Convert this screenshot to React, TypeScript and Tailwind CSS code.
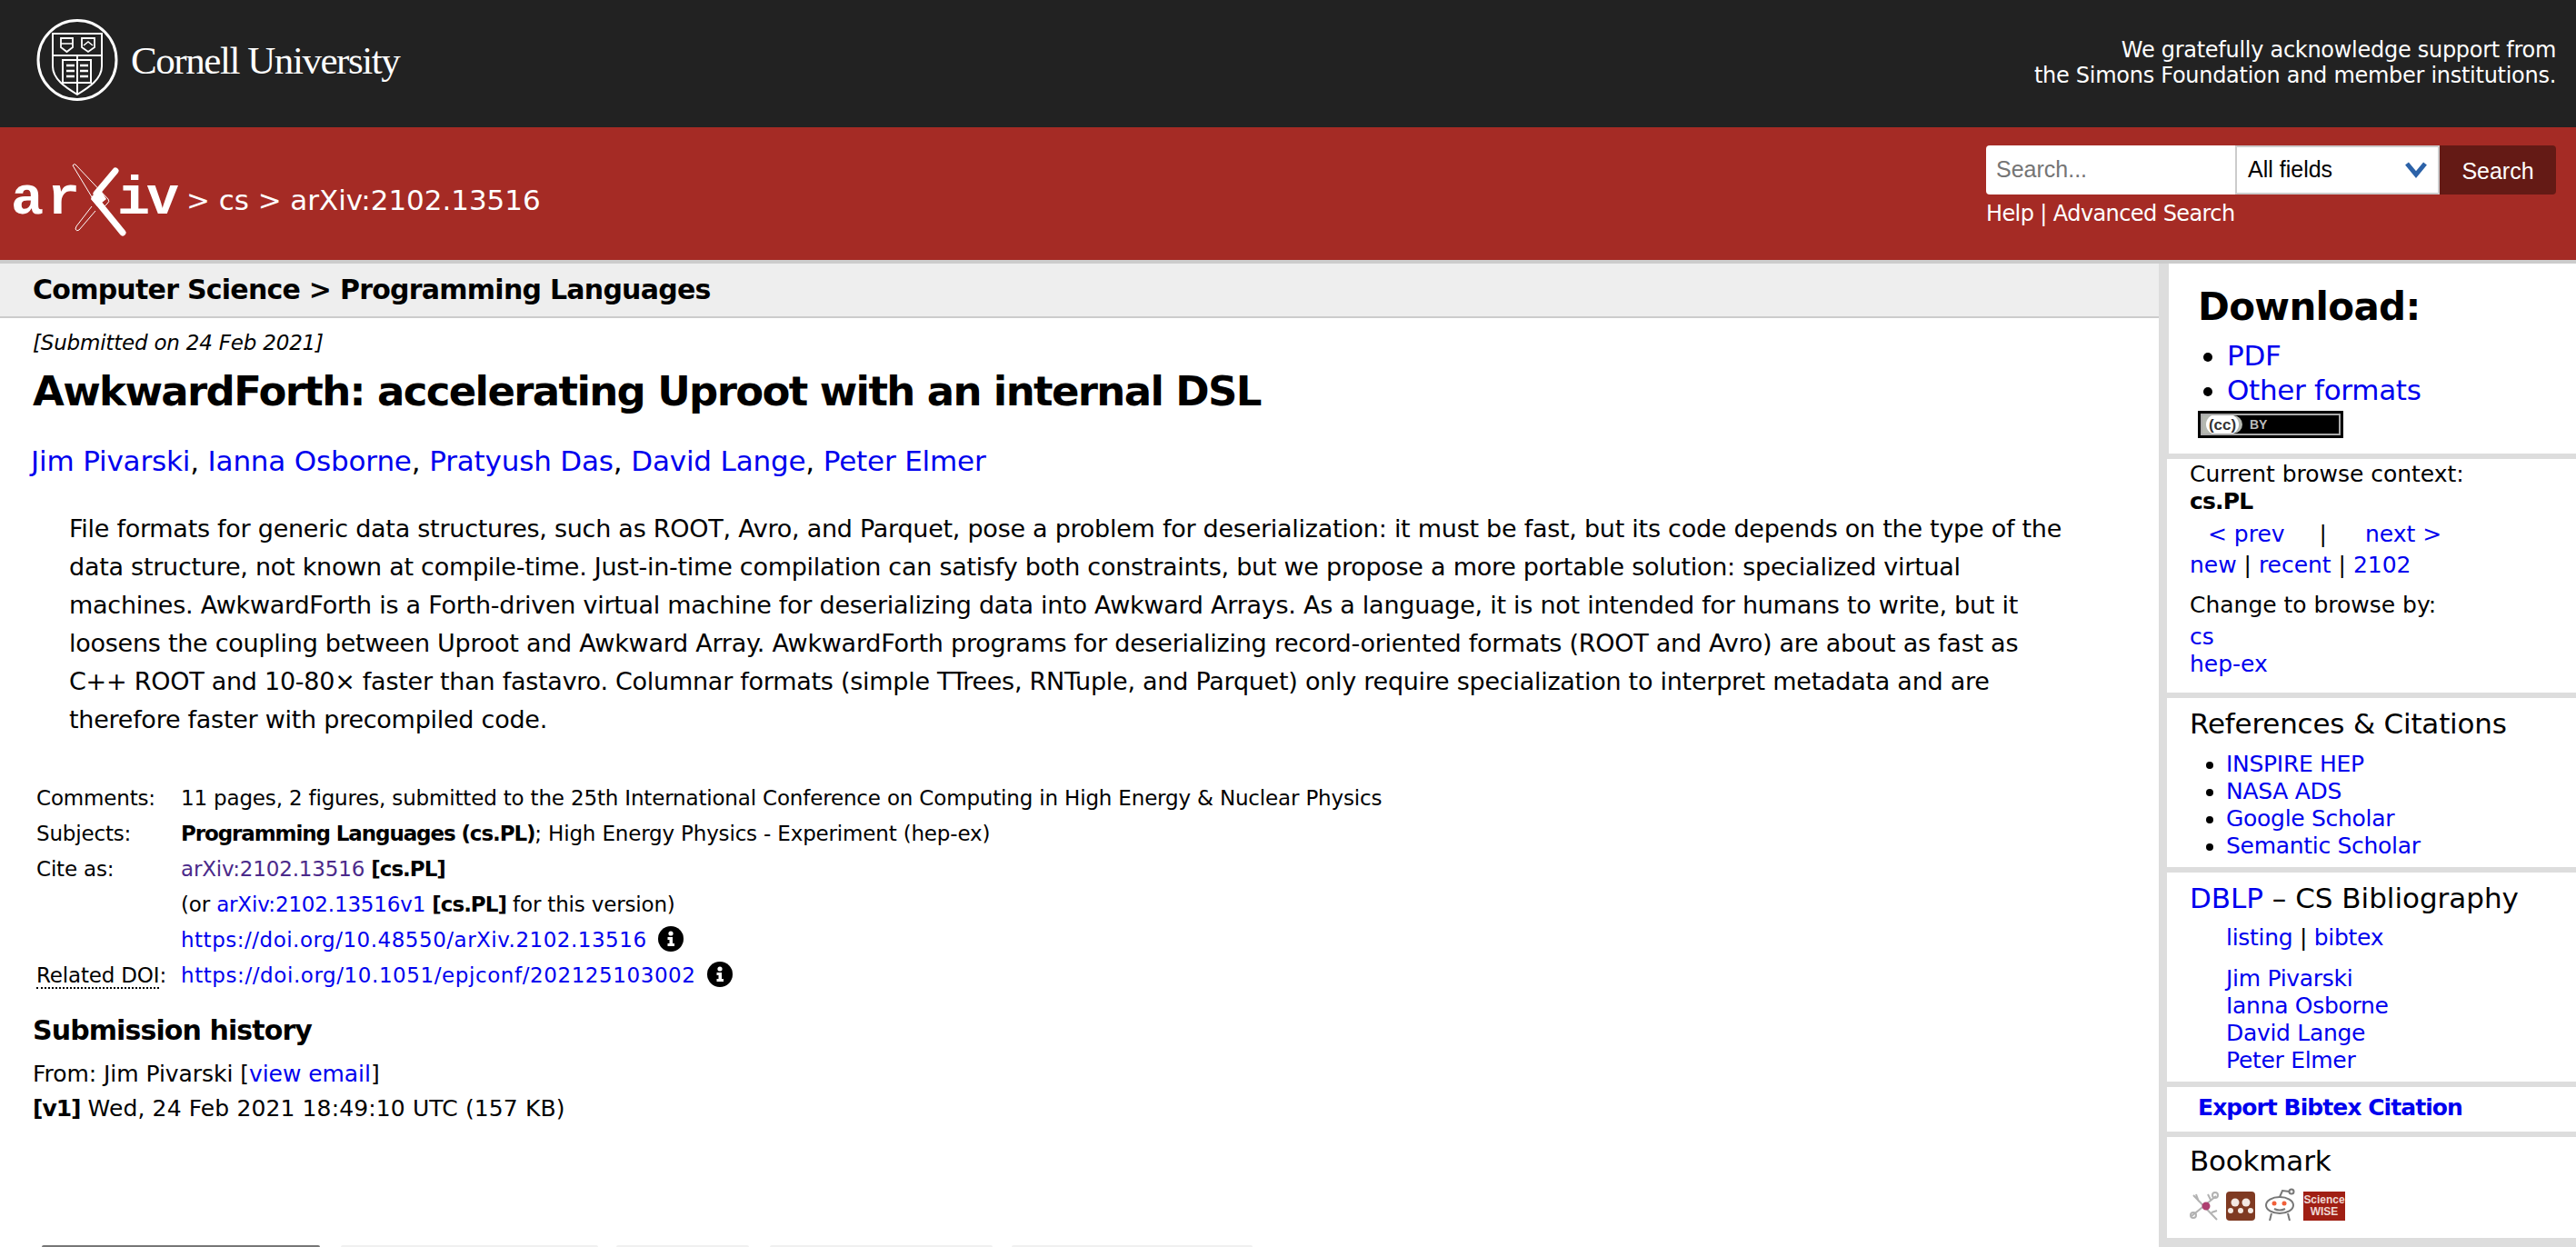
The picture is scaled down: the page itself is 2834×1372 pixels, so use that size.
const sans = "font-['DejaVu_Sans',sans-serif]";

const abstractLines = [
  "File formats for generic data structures, such as ROOT, Avro, and Parquet, pose a problem for deserialization: it must be fast, but its code depends on the type of the",
  "data structure, not known at compile-time. Just-in-time compilation can satisfy both constraints, but we propose a more portable solution: specialized virtual",
  "machines. AwkwardForth is a Forth-driven virtual machine for deserializing data into Awkward Arrays. As a language, it is not intended for humans to write, but it",
  "loosens the coupling between Uproot and Awkward Array. AwkwardForth programs for deserializing record-oriented formats (ROOT and Avro) are about as fast as",
  "C++ ROOT and 10-80× faster than fastavro. Columnar formats (simple TTrees, RNTuple, and Parquet) only require specialization to interpret metadata and are",
  "therefore faster with precompiled code.",
];

function CornellSeal() {
  return (
    <svg width="90" height="90" viewBox="0 0 90 90" fill="none" stroke="white">
      <ellipse cx="45" cy="45" rx="43" ry="43.5" strokeWidth="3" />
      <path d="M18 16H72V52C72 66 58 75 45 83C32 75 18 66 18 52Z" strokeWidth="2" />
      <path d="M18 40H72M45 40V83" strokeWidth="2" />
      <path d="M27 21H40V31L33.5 36L27 31Z M50 21H64V31L57 36L50 31Z" strokeWidth="1.8" />
      <path d="M27 27H40M52 29L57 25L62 29" strokeWidth="1.5" />
      <path d="M29 45H60V70H29Z" strokeWidth="2" />
      <path d="M33 51H42M33 57H42M33 63H42M48 51H57M48 57H57M48 63H57" strokeWidth="2.6" />
    </svg>
  );
}

function ArxivLogo() {
  const letters = "absolute top-[14px] text-[60px] leading-[60px] font-bold text-white font-['Liberation_Mono',monospace]";
  return (
    <div className="relative w-[188px] h-[90px] shrink-0">
      <span className={letters + " left-[2px] tracking-[4px]"}>ar</span>
      <span className={letters + " left-[119px] -tracking-[4px]"}>iv</span>
      <svg className="absolute left-0 top-0" width="200" height="90" viewBox="0 0 200 90" fill="none">
        <path d="M70 7Q71 5 73 6L109 44Q111 47 108 49L103 54M70 7L96 50" stroke="white" strokeWidth="1" />
        <path d="M95 57L77 78Q74 80 73 77L74 74L91 52" stroke="white" strokeWidth="1" />
        <path d="M117 13L96 38" stroke="white" strokeWidth="7" strokeLinecap="round" />
        <path d="M94 43L125 81" stroke="white" strokeWidth="7" strokeLinecap="round" />
        <path d="M100 33L90 44L97 52L107 44Z" fill="white" />
      </svg>
    </div>
  );
}

function InfoIcon() {
  return (
    <svg className="inline-block ml-[12px] align-[-5px]" width="28" height="28" viewBox="0 0 28 28">
      <circle cx="14" cy="14" r="14" fill="black" />
      <circle cx="14" cy="8" r="2.6" fill="white" />
      <path d="M10.5 12H16V19H18V22H10.5V19H12.5V15H10.5Z" fill="white" />
    </svg>
  );
}

function CcBadge() {
  return (
    <div className="mt-[4px] w-[160px] h-[30px] bg-[#aaaaaa] border-[3px] border-black p-[2px] font-['Liberation_Sans',sans-serif]">
      <div className="h-full bg-black flex items-center overflow-hidden">
        <div className="w-[44px] h-full bg-[#b5b8b1] rounded-r-[10px] flex items-center justify-center">
          <div className="w-[36px] h-[22px] rounded-full bg-white flex items-center justify-center text-[17px] leading-none font-bold text-[#333333]">(cc)</div>
        </div>
        <span className="ml-[8px] text-[14px] leading-none font-bold text-[#bbbbbb]">BY</span>
      </div>
    </div>
  );
}

function BookmarkIcons() {
  return (
    <div className="flex items-end mt-[10px]">
      <svg width="32" height="32" viewBox="0 0 32 32" stroke="#b2b2b2" fill="none" strokeWidth="2">
        <path d="M4 4L30 31M2 27L29 5M10 11L7 3M23 9L20 3M24 23L30 21" />
        <circle cx="28" cy="4" r="3" />
        <circle cx="4" cy="26" r="3" />
        <circle cx="18" cy="16" r="3.5" fill="#ad3f70" stroke="#ad3f70" />
      </svg>
      <svg className="ml-[8px]" width="32" height="32" viewBox="0 0 32 32">
        <rect width="32" height="32" rx="4" fill="#7f3a22" />
        <circle cx="10" cy="12" r="4.5" fill="#f3e8e2" />
        <circle cx="22" cy="12" r="4.5" fill="#f3e8e2" />
        <circle cx="16" cy="21" r="3" fill="#f3e8e2" />
        <circle cx="5" cy="21" r="3" fill="#f3e8e2" />
        <circle cx="27" cy="21" r="3" fill="#f3e8e2" />
      </svg>
      <svg className="ml-[9px]" width="36" height="36" viewBox="0 0 36 36" fill="none" stroke="#777777" strokeWidth="2">
        <ellipse cx="18" cy="19" rx="15" ry="9" fill="white" />
        <circle cx="12" cy="17" r="2.5" fill="#f0603a" stroke="none" />
        <circle cx="23" cy="17" r="2.5" fill="#f0603a" stroke="none" />
        <path d="M18 10L21 3L29 4M12 23Q18 26 24 23M9 28L7 36M27 28L29 36" />
        <circle cx="31" cy="4" r="2.5" />
      </svg>
      <div className="ml-[8px] w-[46px] h-[32px] bg-[#a01f14] text-[#efd9d5] flex flex-col items-center justify-center text-[12px] leading-[13px] font-['Liberation_Sans',sans-serif] font-bold">
        <span>Science</span>
        <span>WISE</span>
      </div>
    </div>
  );
}

function A({ children, className = "" }: { children: React.ReactNode; className?: string }) {
  return <a className={"text-[#0000ee] " + className}>{children}</a>;
}

function MetaRow({ label, children }: { label: React.ReactNode; children: React.ReactNode }) {
  return (
    <div className="flex h-[39px] items-center">
      <div className="w-[159px] shrink-0">{label}</div>
      <div>{children}</div>
    </div>
  );
}

export default function App() {
  return (
    <div className={"w-[2834px] h-[1372px] overflow-hidden bg-white text-black flex flex-col " + sans}>
      {/* Cornell bar */}
      <div className="h-[140px] bg-[#222222] flex items-center justify-between pl-[40px] pr-[22px] text-white">
        <div className="flex items-center gap-[14px] -mt-[8px]">
          <CornellSeal />
          <span className="font-['Liberation_Serif',serif] text-[43px] tracking-[-1.44px] pt-[3px]">Cornell University</span>
        </div>
        <div className="text-right text-[24px] leading-[28px] -mt-[2px] tracking-[-0.28px]">
          <div>We gratefully acknowledge support from</div>
          <div>the Simons Foundation and member institutions.</div>
        </div>
      </div>

      {/* Red header */}
      <div className="h-[150px] bg-[#a52b25] border-b-4 border-[#cccccc] flex justify-between pl-[10px] pr-[22px] text-white">
        <div className="flex items-center gap-[7px] pt-[14px]">
          <ArxivLogo />
          <span className="text-[31px] tracking-[-0.05px]">&gt; cs &gt; arXiv:2102.13516</span>
        </div>
        <div className="pt-[20px] w-[627px]">
          <div className="flex h-[54px] font-['Liberation_Sans',sans-serif]">
            <div className="w-[274px] bg-white rounded-l-[4px] pl-[11px] flex items-center text-[25px] text-[#757575]">Search...</div>
            <div className="w-[225px] bg-white border-2 border-[#cccccc] pl-[12px] pr-[12px] flex items-center justify-between text-[25px] text-black">
              <span>All fields</span>
              <svg width="24" height="20" viewBox="0 0 24 20" fill="none" stroke="#2c62a8" strokeWidth="5"><path d="M2 3L12 15L22 3" /></svg>
            </div>
            <div className="flex-1 bg-[#641a15] rounded-r-[4px] flex items-center justify-center pt-[3px] text-[25px] text-white">Search</div>
          </div>
          <div className="text-[24px] mt-[5px] leading-[32px] tracking-[-0.6px]">Help | Advanced Search</div>
        </div>
      </div>

      <div className="flex flex-1 min-h-0">
        {/* Main column */}
        <div className="flex-1 flex flex-col min-w-0">
          <div className="h-[60px] bg-[#eeeeee] border-b-2 border-[#cccccc] pl-[36px] flex items-center text-[30px] font-bold tracking-[-0.75px] pb-[2px]">
            Computer Science &gt; Programming Languages
          </div>
          <div className="pl-[36px] flex-1 flex flex-col">
            <div className="text-[23px] italic mt-[12px] leading-[30px] tracking-[-0.2px]">[Submitted on 24 Feb 2021]</div>
            <h1 className="text-[45px] font-bold leading-[60px] mt-[9px] tracking-[-1.64px]">AwkwardForth: accelerating Uproot with an internal DSL</h1>
            <div className="text-[31px] leading-[40px] mt-[26px] -ml-[2px] tracking-[-0.17px]">
              <A>Jim Pivarski</A>, <A>Ianna Osborne</A>, <A>Pratyush Das</A>, <A>David Lange</A>, <A>Peter Elmer</A>
            </div>
            <div className="ml-[40px] mt-[34px] text-[27px] leading-[41.9px] tracking-[-0.26px] whitespace-nowrap">
              {abstractLines.map((line) => (
                <div key={line}>{line}</div>
              ))}
            </div>
            <div className="ml-[4px] mt-[46px] text-[23px] tracking-[-0.17px]">
              <MetaRow label="Comments:">11 pages, 2 figures, submitted to the 25th International Conference on Computing in High Energy &amp; Nuclear Physics</MetaRow>
              <MetaRow label="Subjects:"><b className="tracking-[-1.1px]">Programming Languages (cs.PL)</b>; High Energy Physics - Experiment (hep-ex)</MetaRow>
              <MetaRow label="Cite as:"><a className="text-[#4b2a8a]">arXiv:2102.13516</a> <b className="tracking-[-1px]">[cs.PL]</b></MetaRow>
              <MetaRow label=""> (or <A>arXiv:2102.13516v1</A> <b className="tracking-[-1px]">[cs.PL]</b> for this version)</MetaRow>
              <MetaRow label=""><A className="tracking-[0.51px]">https://doi.org/10.48550/arXiv.2102.13516</A><InfoIcon /></MetaRow>
              <MetaRow label={<span><abbr className="no-underline border-b-2 border-dotted border-black">Related DOI</abbr>:</span>}><A className="tracking-[0.58px]">https://doi.org/10.1051/epjconf/202125103002</A><InfoIcon /></MetaRow>
            </div>
            <h2 className="text-[30px] font-bold mt-[22px] leading-[40px] tracking-[-0.9px]">Submission history</h2>
            <div className="text-[25px] leading-[38px] mt-[9px] tracking-[-0.05px]">
              <div>From: Jim Pivarski [<A>view email</A>]</div>
              <div className="tracking-[0.12px]"><b className="tracking-[-1px]">[v1]</b> Wed, 24 Feb 2021 18:49:10 UTC (157 KB)</div>
            </div>
            {/* top edge of the next row, clipped by the window */}
            <div className="mt-auto flex h-[2px] ml-[10px]">
              <div className="w-[306px] rounded-t-[2px] bg-[#777777]" />
              <div className="ml-[23px] w-[283px] rounded-t-[2px] bg-[#f0f0f0]" />
              <div className="ml-[20px] w-[146px] rounded-t-[2px] bg-[#f0f0f0]" />
              <div className="ml-[23px] w-[245px] rounded-t-[2px] bg-[#f0f0f0]" />
              <div className="ml-[21px] w-[265px] rounded-t-[2px] bg-[#f0f0f0]" />
            </div>
          </div>
        </div>

        {/* Sidebar */}
        <div className="w-[459px] shrink-0 bg-[#dddddd] pl-[9px] pb-[10px] flex flex-col gap-[6px] text-[25px] tracking-[-0.02px]">
          <div className="h-[209px] ml-[2px] bg-white pl-[32px] pt-[24px]">
            <div className="text-[42px] font-bold leading-[48px] tracking-[-0.7px]">Download:</div>
            <ul className="list-disc ml-[32px] mt-[10px] text-[31px] leading-[38px] -tracking-[0.3px]">
              <li><A>PDF</A></li>
              <li><A>Other formats</A></li>
            </ul>
            <CcBadge />
          </div>
          <div className="h-[257px] bg-white pl-[25px] pt-[2px] leading-[30px]">
            <div>Current browse context:</div>
            <div className="font-bold tracking-[-0.8px]">cs.PL</div>
            <div className="mt-[6px] flex"><A className="ml-[20px]">&lt; prev</A><span className="ml-[38px]">|</span><A className="ml-[42px]">next &gt;</A></div>
            <div className="mt-[4px]"><A>new</A> | <A>recent</A> | <A>2102</A></div>
            <div className="mt-[14px]">Change to browse by:</div>
            <div className="mt-[5px]"><A>cs</A></div>
            <div><A>hep-ex</A></div>
          </div>
          <div className="h-[186px] bg-white pl-[25px] pt-[8px]">
            <div className="text-[31px] leading-[40px] tracking-[-0.2px]">References &amp; Citations</div>
            <ul className="list-disc ml-[40px] mt-[10px] leading-[30px] tracking-[-0.3px]">
              <li><A>INSPIRE HEP</A></li>
              <li><A>NASA ADS</A></li>
              <li><A>Google Scholar</A></li>
              <li><A>Semantic Scholar</A></li>
            </ul>
          </div>
          <div className="h-[230px] bg-white pl-[25px] pt-[8px]">
            <div className="text-[31px] leading-[40px]"><A>DBLP</A> – CS Bibliography</div>
            <div className="ml-[40px] mt-[9px] leading-[30px] tracking-[-0.3px]"><A>listing</A> | <A>bibtex</A></div>
            <div className="ml-[40px] mt-[15px] leading-[30px] tracking-[-0.3px]">
              <div><A>Jim Pivarski</A></div>
              <div><A>Ianna Osborne</A></div>
              <div><A>David Lange</A></div>
              <div><A>Peter Elmer</A></div>
            </div>
          </div>
          <div className="h-[49px] bg-white pl-[34px] pb-[3px] flex items-center font-bold tracking-[-0.95px]"><A>Export Bibtex Citation</A></div>
          <div className="flex-1 bg-white pl-[25px] pt-[6px]">
            <div className="text-[31px] leading-[40px] tracking-[-0.2px]">Bookmark</div>
            <BookmarkIcons />
          </div>
        </div>
      </div>
    </div>
  );
}
